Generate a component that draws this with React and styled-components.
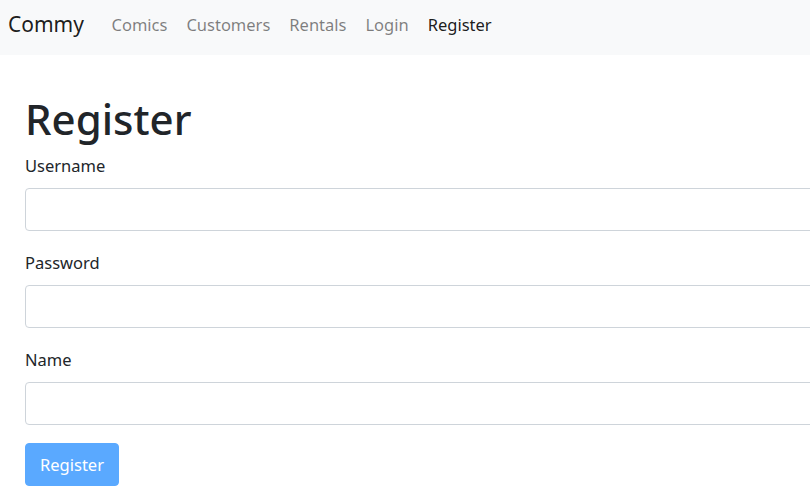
import styled, { createGlobalStyle } from "styled-components";

const GlobalStyle = createGlobalStyle`
  html, body {
    margin: 0;
    padding: 0;
    overflow: hidden;
    background: #fff;
  }
  body {
    font-family: "Noto Sans", "Open Sans", sans-serif;
    color: #212529;
  }
  * {
    box-sizing: border-box;
  }
`;

const links = [
  { label: "Comics" },
  { label: "Customers" },
  { label: "Rentals" },
  { label: "Login" },
  { label: "Register", active: true },
];

const fields = [
  { id: "username", label: "Username", type: "text" },
  { id: "password", label: "Password", type: "password" },
  { id: "name", label: "Name", type: "text" },
];

const App = () => {
  return (
    <>
      <GlobalStyle />
      <NavBar>
        <Brand href="#">Commy</Brand>
        <NavList>
          {links.map((link) => (
            <NavLink key={link.label} href="#" $active={link.active}>
              {link.label}
            </NavLink>
          ))}
        </NavList>
      </NavBar>
      <Main>
        <Title>Register</Title>
        <form onSubmit={(e) => e.preventDefault()}>
          {fields.map((field) => (
            <FormGroup key={field.id}>
              <Label htmlFor={field.id}>{field.label}</Label>
              <Input id={field.id} type={field.type} />
            </FormGroup>
          ))}
          <SubmitButton type="submit" disabled>
            Register
          </SubmitButton>
        </form>
      </Main>
    </>
  );
};

const NavBar = styled.nav`
  display: flex;
  align-items: center;
  height: 55px;
  padding: 0 8px;
  background: #f8f9fa;
`;

const Brand = styled.a`
  font-size: 21px;
  color: rgba(0, 0, 0, 0.9);
  text-decoration: none;
  margin-right: 18px;
  line-height: 1;
  padding-bottom: 7px;
`;

const NavList = styled.div`
  display: flex;
  align-items: center;
`;

const NavLink = styled.a`
  font-size: 16.5px;
  padding: 0 9.5px 5px;
  text-decoration: none;
  color: ${(p) => (p.$active ? "rgba(0, 0, 0, 0.9)" : "rgba(0, 0, 0, 0.5)")};
  line-height: 1;
`;

const Main = styled.main`
  width: 1200px;
  padding: 38px 0 0 25px;
`;

const Title = styled.h1`
  margin: 0 0 9px;
  font-size: 42px;
  font-weight: 500;
  line-height: 1.2;
  color: #212529;
  padding-top: 1px;
`;

const FormGroup = styled.div`
  margin-bottom: 19px;
`;

const Label = styled.label`
  display: block;
  font-size: 16.5px;
  line-height: 26px;
  margin-bottom: 9px;
`;

const Input = styled.input`
  display: block;
  width: 100%;
  height: 43px;
  border: 1px solid #ced4da;
  border-radius: 4px;
  background: #fff;
  padding: 6px 13px;
  font-size: 16.5px;
  font-family: inherit;
`;

const SubmitButton = styled.button`
  display: block;
  height: 43px;
  margin-top: -1px;
  padding: 0 14px;
  border: 1px solid #5aa9ff;
  border-radius: 4px;
  background: #5aa9ff;
  color: #fff;
  font-size: 16.5px;
  font-family: inherit;
  line-height: 1;
`;

export default App;
